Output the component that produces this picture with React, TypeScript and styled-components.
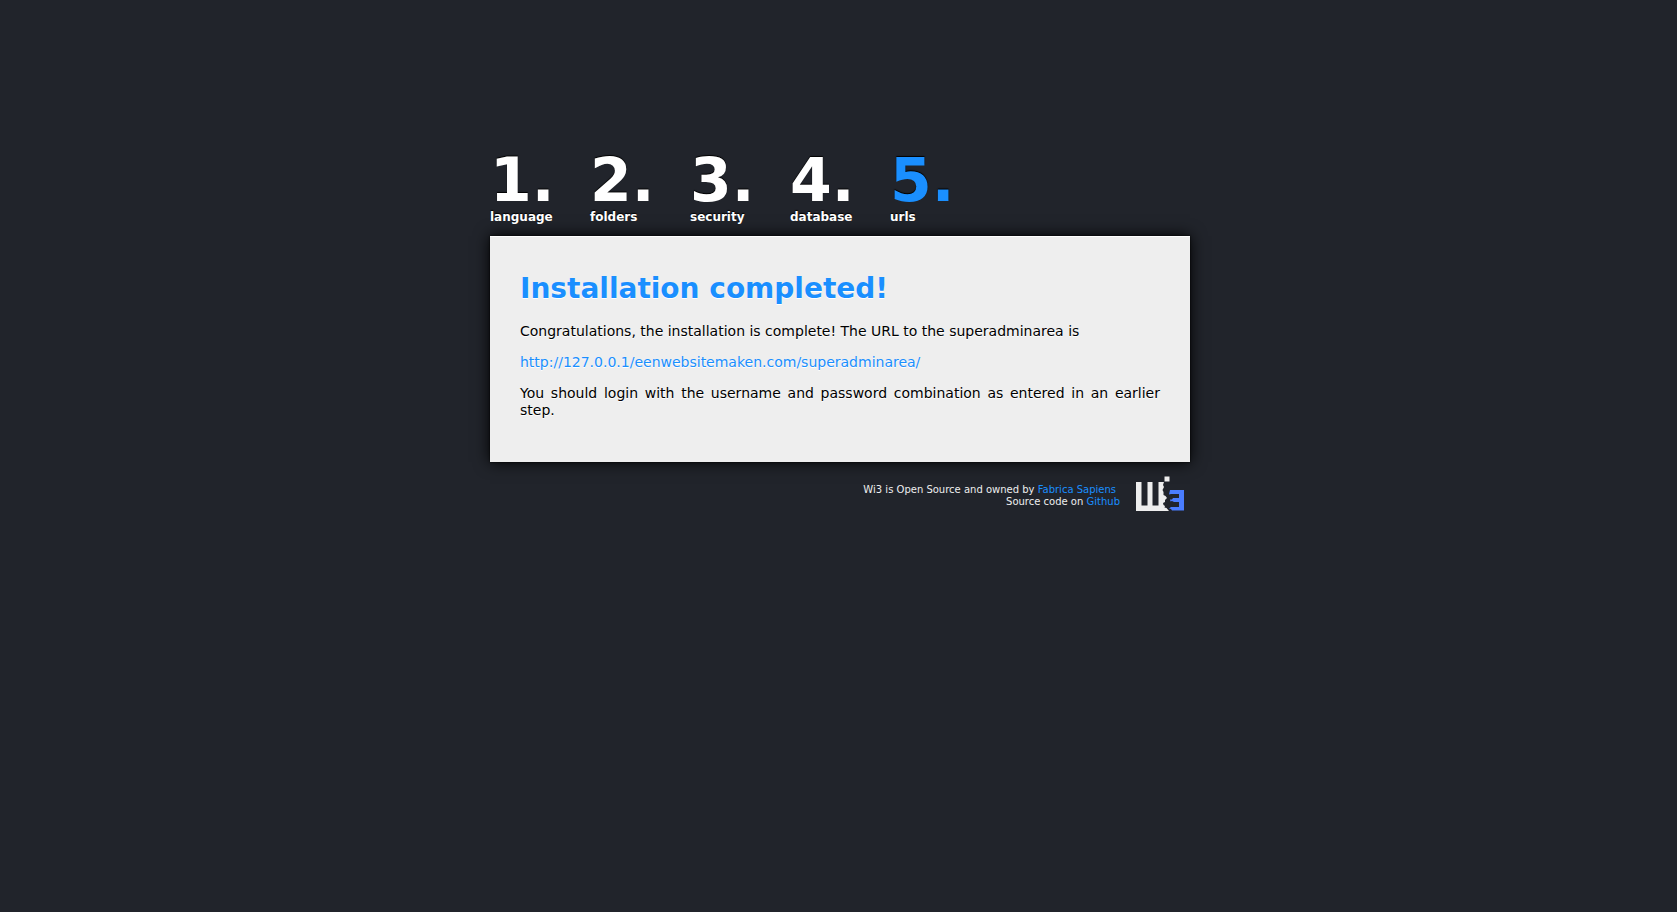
import React from "react";
import styled, { createGlobalStyle } from "styled-components";

const GlobalStyle = createGlobalStyle`
  body {
    margin: 0;
    background: #21242b;
    color: #000;
    font-family: Verdana, "DejaVu Sans", sans-serif;
    font-size: 14px;
    line-height: 17px;
  }
`;

const Page = styled.div`
  box-sizing: border-box;
  max-width: 703px;
  margin: 0 auto;
  padding: 150px 0 40px 3px;
`;

const Steps = styled.ol`
  display: flex;
  margin: 0;
  padding: 0 0 12px;
  list-style: none;
`;

const Step = styled.li`
  width: 100px;
  color: #fff;
  font-size: 12px;
  font-weight: bold;
  line-height: 14px;
  text-shadow: 0 -1px 1px #000;
`;

const StepNumber = styled.div<{ $active?: boolean }>`
  color: ${(p) => (p.$active ? "#1a8fff" : "#fff")};
  font-size: 60px;
  line-height: 60px;
`;

const Panel = styled.main`
  padding: 33px 30px 43px;
  background: #eee;
  border-top: 1px solid #fff;
  box-shadow: 0 0 15px #000, 0 0 2px #000;
  text-align: justify;
  text-shadow: 0 1px 0 #fff;
`;

const Title = styled.h1`
  margin: 0 0 15px;
  color: #1a8fff;
  font-size: 28px;
  line-height: 38px;
`;

const Paragraph = styled.p`
  margin: 0 0 14px;
  &:last-child {
    margin: 0;
  }
`;

const Link = styled.a`
  color: #1a8fff;
  text-decoration: none;
`;

const Footer = styled.footer`
  display: flex;
  justify-content: flex-end;
  gap: 16px;
  padding: 14px 6px 0 0;
  color: #eee;
  font-size: 10px;
  line-height: 12px;
  text-align: right;
`;

const Credits = styled.div`
  padding-top: 8px;
`;

const Owner = styled.div`
  padding-right: 4px;
`;

const steps = ["language", "folders", "security", "database", "urls"];

const Logo = () => (
  <svg width="48" height="35" viewBox="0 0 48 35" role="img" aria-label="Wi3">
    <path
      fill="#eee"
      d="M0 6h5.500v23.500h6V6h5v23.500h6V6h5.500l-1 3 1 2-1.500 3 1 2 0 3 2 1 1.500 2-2 2 0 2-2 1 .5 2 1.500 1-.5 1.500 2 .5 2.500 3H0z"
    />
    <path fill="#eee" d="M28.500 .5h5v5h-5z" />
    <path
      fill="#4a7dff"
      d="M34 14h14v20.500H36l-1-1.500-2-.5 2-1.500h8v-5h-5l-2-1-1.500 .5-.5-2 2 0 1-1.500h6v-4H35l-2 .5z"
    />
  </svg>
);

export default function App() {
  return (
    <>
      <GlobalStyle />
      <Page>
        <Steps>
          {steps.map((name, i) => (
            <Step key={name}>
              <StepNumber $active={i === steps.length - 1}>{i + 1}.</StepNumber>
              {name}
            </Step>
          ))}
        </Steps>
        <Panel>
          <Title>Installation completed!</Title>
          <Paragraph>
            Congratulations, the installation is complete! The URL to the superadminarea is
          </Paragraph>
          <Paragraph>
            <Link href="http://127.0.0.1/eenwebsitemaken.com/superadminarea/">
              http://127.0.0.1/eenwebsitemaken.com/superadminarea/
            </Link>
          </Paragraph>
          <Paragraph>
            You should login with the username and password combination as entered in an earlier
            step.
          </Paragraph>
        </Panel>
        <Footer>
          <Credits>
            <Owner>
              Wi3 is Open Source and owned by <Link href="#fabrica-sapiens">Fabrica Sapiens</Link>
            </Owner>
            <div>
              Source code on <Link href="#github">Github</Link>
            </div>
          </Credits>
          <Logo />
        </Footer>
      </Page>
    </>
  );
}
